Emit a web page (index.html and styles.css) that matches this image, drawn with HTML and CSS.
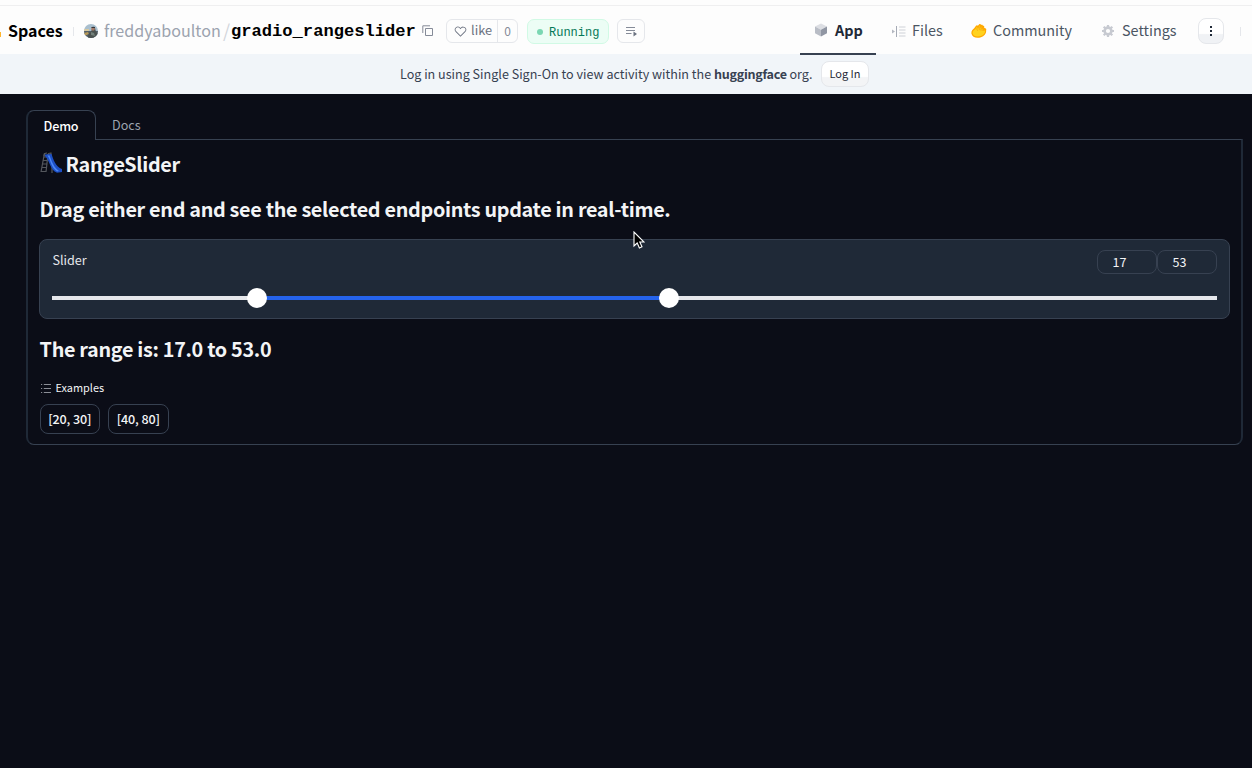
FILE: index.html
```html
<!DOCTYPE html>
<html lang="en">
<head>
<meta charset="utf-8">
<title>gradio_rangeslider</title>
<link rel="stylesheet" href="styles.css">
</head>
<body>
<header class="header">
  <div class="repo">
    <span class="logo-edge"></span>
    <span class="spaces">Spaces</span>
    <span class="divider"></span>
    <svg class="avatar" viewBox="0 0 14 14"><defs><clipPath id="round"><circle cx="7" cy="7" r="7"/></clipPath></defs><g clip-path="url(#round)"><path fill="#a9bfce" d="M0 0h14v14H0z"/><path fill="#d8c9a0" d="M0 5h5v2H0z"/><path fill="#55616a" d="M0 7h14v7H0z"/><path fill="#b99a58" d="M0 9l4-1 1 2-5 2z"/><path fill="#4b5250" d="M4 12l1-3 2-1 1-3 3-1 1 4 2 2v4H4z"/><circle cx="9" cy="5" r="1.800" fill="#a77b68"/><path fill="#343638" d="M7 4q1-2 4-1v1z"/><path fill="#73817b" d="M7 8l3 1 1 3-4-1z"/></g></svg>
    <span class="owner">freddyaboulton</span>
    <span class="slash">/</span>
    <span class="name">gradio_rangeslider</span>
    <svg class="copy" viewBox="0 0 12 12"><path d="M3.500 3.500h7v7h-7zM.8 8V.8H8" fill="none" stroke="#858b98"/></svg>
    <div class="like"><span class="like-main"><svg class="heart" viewBox="0 0 32 32"><path fill="#6b7280" d="M22.45 6a5.47 5.47 0 0 1 3.91 1.64 5.7 5.7 0 0 1 0 8L16 26.13 5.64 15.64a5.7 5.7 0 0 1 0-8 5.48 5.48 0 0 1 7.82 0l2.54 2.6 2.53-2.58A5.44 5.44 0 0 1 22.45 6m0-2a7.47 7.47 0 0 0-5.34 2.24L16 7.36l-1.11-1.12a7.49 7.49 0 0 0-10.68 0 7.72 7.72 0 0 0 0 10.82L16 29l11.79-11.94a7.72 7.72 0 0 0 0-10.82A7.49 7.49 0 0 0 22.45 4Z"/></svg><span class="lift">like</span></span><span class="like-count">0</span></div>
    <div class="running"><span class="dot"></span><span class="running-text">Running</span></div>
    <div class="logs"><svg viewBox="0 0 12 12"><path d="M0 1.500h9M0 4.500h9M0 7.500h5.500" stroke="#858b98" stroke-width="1.100"/><path d="M7.500 5.500v5l3.500-2.500z" fill="#6b7280"/></svg></div>
  </div>
  <nav class="nav">
    <a class="nav-item active"><svg class="cube" viewBox="0 0 12 14"><path fill="#dcdee3" d="M6 .5l6 3-6 3.300-6-3.300z"/><path fill="#b9bdc6" d="M0 3.500l6 3.300v6.700l-6-3.200z"/><path fill="#9096a3" d="M12 3.500l-6 3.300v6.700l6-3.200z"/></svg><span>App</span></a>
    <a class="nav-item files"><svg class="files-icon" viewBox="0 0 14 11"><path fill="#b4b8c1" d="M0 3.500l3 2-3 2z"/><path d="M4.500 0v11" stroke="#a5aab5"/><path d="M7 1h6.500M7 4h6.500M7 7h6.500M7 10h6.500" stroke="#ced1d7"/></svg><span class="lift">Files</span></a>
    <a class="nav-item community"><svg class="hand" viewBox="0 0 16 14"><path fill="#ffa800" d="M.4 9.500C.2 7 1.500 5.500 3.200 4.300L5 1.700c.6-.9 1.700-.6 1.900.1L8 .5c1-.9 2-.2 1.900.6 1-.9 2.200-.2 1.900.8 1.200-.3 1.900.8 1.300 1.800 2.300.8 2.500 1.500 2 2.300.6 2.900-1.600 6.200-5.100 7.200C5.500 14.500 1 13.300.4 9.500z"/><path fill="#ffd21e" d="M1.500 9c.2-2 1.200-2.900 2.800-3.700L6 2.400l.5 2.700L9 1.300l-.5 3.300L11 2.500l-.8 3.100 2.300-1-.7 2.200 2.400-.3c-.1 2.800-1.700 4.800-4.500 5.600-3.500 1-7.700.3-8.200-3.100z"/><path d="M5.500 4.500l1.200 2.300M7.900 2.800l.5 3.300M10.300 3.200l-.6 3.200M12.500 4.800l-1.700 2.100" stroke="#f59b0b" stroke-width=".7" fill="none"/></svg><span class="lift">Community</span></a>
    <a class="nav-item settings"><svg class="gear" viewBox="0 0 12 12"><circle cx="6" cy="6" r="3.400" fill="none" stroke="#c7cad1" stroke-width="2.600"/><path d="M6 0v2.300M6 9.700V12M0 6h2.300M9.700 6H12M1.700 1.700l1.600 1.600M8.700 8.700l1.600 1.600M1.700 10.300l1.600-1.600M8.700 3.300l1.600-1.600" stroke="#c7cad1" stroke-width="2.200"/></svg><span class="lift">Settings</span></a>
    <span class="more"><svg viewBox="0 0 4 10"><path fill="#1f2937" d="M1 0h2v2H1zM1 4h2v2H1zM1 8h2v2H1z"/></svg></span>
    <span class="divider end"></span>
  </nav>
</header>
<div class="banner"><span class="banner-text">Log in using Single Sign-On to view activity within the <b>huggingface</b> org.</span><span class="login">Log In</span></div>
<main class="app">
  <div class="tabs"><span class="tab selected">Demo</span><span class="tab docs">Docs</span></div>
  <section class="panel">
    <h2 class="title"><svg class="slide" viewBox="0 0 22 22"><g fill="none" stroke="#54575d" stroke-width="1.200"><path d="M4.500 1L1 20M8 2L6 20M3.500 5H8M3 8.500h4.500M2.500 12H7M2 15.500h4.500M1 19.500h5"/><path d="M4 4q0-3 3-3M8 3q0-2 3-2v6"/><path d="M12 14v7"/></g><path fill="#1d4fc4" d="M5 2.500L11.500 2c2 6 4 12.500 10.500 15v3l-5 .8C10 18 10 9 5 4z"/><path fill="#4b86f3" d="M7.500 3.500h2c2 5 4 12 9.500 15.500l-2 .5c-6-4-6-11-9.500-16z"/></svg><span>RangeSlider</span></h2>
    <h2 class="subtitle">Drag either end and see the selected endpoints update in real-time.</h2>
    <div class="slider-block">
      <div class="slider-head"><span class="slider-label">Slider</span><div class="numbers"><span class="number">17</span><span class="number">53</span></div></div>
      <div class="track"><div class="range"></div><span class="thumb low"></span><span class="thumb high"></span></div>
    </div>
    <h2 class="result">The range is: 17.0 to 53.0</h2>
    <div class="examples-label"><svg viewBox="0 0 10 9"><path d="M0 .5h1.200M0 4.500h1.200M0 8.500h1.200M2.800 .5H10M2.800 4.500H10M2.800 8.500H10" stroke="#8b8e96"/></svg><span class="lift">Examples</span></div>
    <div class="examples"><span class="example">[20, 30]</span><span class="example">[40, 80]</span></div>
  </section>
</main>
<svg class="cursor" viewBox="0 0 12 19"><path d="M1 1v14l3.200-3 2.200 5 2.600-1.200L6.800 11H11z" fill="#000" stroke="#fff" stroke-width="1.100"/></svg>
</body>
</html>
```
FILE: styles.css
```css
* { box-sizing: border-box; }
body { margin: 0; height: 768px; overflow: hidden; background: #0b0d17; font-family: "Noto Sans CJK SC", "Noto Sans", sans-serif; display: flex; flex-direction: column; }
svg { display: block; flex: none; }
span { white-space: nowrap; }
.lift { padding-bottom: 2px; }
.header { height: 54px; flex: none; padding-top: 7px; display: flex; justify-content: space-between; background: linear-gradient(#fdfdfd 0 5px, #efeff0 5px 6px, #fdfdfd 6px); }
.repo { display: flex; align-items: center; height: 48px; }
.logo-edge { width: 1px; height: 5px; margin-top: 7px; background: #ffb52b; }
.spaces { width: 65px; padding: 0 0 2px 7px; font-size: 16px; font-weight: 700; color: #000; }
.divider { width: 1px; height: 9px; margin-left: 7px; background: #e5e7eb; }
.avatar { width: 14px; height: 14px; margin-left: 10px; }
.owner { width: 117px; margin-left: 6px; padding-bottom: 2px; font-size: 16.100px; color: #9ca3af; }
.slash { width: 6px; margin-left: 2px; padding-bottom: 2px; font-size: 18px; line-height: 24px; color: #d1d5db; }
.name { width: 184px; margin-left: 2px; padding-top: 2px; font: 700 17.120px/24px "Liberation Mono", monospace; color: #000; }
.copy { width: 12px; height: 12px; margin-left: 7px; }
.like { display: flex; width: 72px; height: 24px; margin-left: 12px; border: 1px solid #e5e7eb; border-radius: 6px; color: #6b7280; font-size: 12.800px; line-height: 22px; }
.like-main { display: flex; align-items: center; gap: 4px; width: 51px; padding-left: 7px; border-right: 1px solid #e5e7eb; }
.like-main .lift { line-height: 20px; }
.heart { width: 13px; height: 13px; }
.like-count { flex: 1; text-align: center; font-size: 12px; line-height: 21px; color: #858b98; }
.running { display: flex; align-items: center; width: 82px; height: 25px; margin: 1px 0 0 9px; padding-left: 9px; border: 1px solid #d1fae5; border-radius: 7px; background: #ecfdf5; color: #047857; font: 12px/20px "Liberation Mono", monospace; }
.running-text { padding-top: 2px; }
.dot { width: 6px; height: 6px; margin-right: 6px; border-radius: 50%; background: #7ad7b2; }
.logs { width: 28px; height: 24px; margin-left: 8px; padding: 6px 0 0 8px; border: 1px solid #e5e7eb; border-radius: 6px; }
.logs svg { width: 12px; height: 12px; }
.nav { display: flex; width: 452px; height: 48px; align-items: center; color: #4b5563; font-size: 14.400px; line-height: 20px; }
.nav-item { display: flex; align-items: center; height: 48px; }
.active { position: relative; z-index: 1; width: 76px; padding-left: 15px; border-bottom: 2px solid #374151; color: #1f2937; font-weight: 700; }
.cube { width: 12px; height: 14px; margin-right: 8px; }
.files { width: 80px; padding-left: 16px; }
.files-icon { width: 14px; height: 11px; margin-right: 6px; }
.community { width: 130px; padding-left: 15px; }
.hand { width: 16px; height: 14px; margin-right: 6px; }
.settings { width: 112px; padding-left: 16px; }
.gear { width: 12px; height: 12px; margin-right: 8px; }
.more { display: flex; align-items: center; justify-content: center; width: 26px; height: 26px; border: 1px solid #e5e7eb; border-radius: 8px; background: linear-gradient(#fff 60%, #f0f2f5 65%); }
.more svg { width: 4px; height: 10px; }
.end { margin-left: 16px; }
.banner { height: 40px; flex: none; display: flex; padding: 7px 0 0 400px; background: #f1f5f9; color: #374151; font-size: 12.570px; line-height: 26px; }
.banner b { letter-spacing: -.28px; }
.banner-text { width: 413px; }
.login { width: 48px; height: 26px; margin-left: 8px; border: 1px solid #e5e7eb; border-radius: 8px; background: linear-gradient(#fff 60%, #f3f4f6 65%); color: #1f2937; text-align: center; font-size: 11px; line-height: 23px; }
.app { padding: 16px 9px 0 26px; color: #f3f4f6; }
.tabs { display: flex; height: 29px; font-size: 12.600px; line-height: 28px; }
.tab { display: block; }
.selected { position: relative; width: 70px; height: 30px; padding-left: 15.500px; border: 1px solid #374151; border-width: 1px 1px 0 2px; border-left-color: #1f2937; border-radius: 8px 8px 0 0; background: #0b0d17; font-weight: 500; letter-spacing: -.15px; line-height: 29px; color: #fff; }
.docs { padding: 1px 0 0 16px; color: #9ca3af; }
.panel { height: 306px; padding: 0 11px; border: 1px solid #374151; border-width: 1px 2px 1px 2px; border-left-color: #1f2937; border-right-color: #1f2937; border-radius: 0 0 8px 8px; }
h2 { margin: 0; padding-left: .6px; font-size: 19.800px; line-height: 30px; font-weight: 700; letter-spacing: -.31px; white-space: nowrap; color: #f3f4f6; }
.title { display: flex; padding-top: 9px; height: 39px; gap: 4px; }
.slide { width: 22px; height: 22px; margin-top: 3px; }
.subtitle { margin-top: 15px; line-height: 29px; padding-bottom: 1px; }
.slider-block { height: 80px; margin-top: 15px; padding: 10px 12px 0; border: 1px solid #374151; border-radius: 8px; background: #1f2937; }
.slider-head { display: flex; justify-content: space-between; }
.slider-label { padding-left: .5px; font-size: 12.600px; line-height: 19px; color: #e5e7eb; }
.numbers { display: flex; }
.number { width: 60px; height: 24px; padding-left: 14.500px; border: 1px solid #374151; border-radius: 8px; font-size: 12.600px; line-height: 22px; }
.track { position: relative; height: 4px; margin-top: 22px; background: #e5e7eb; }
.range { width: 412px; height: 4px; margin-left: 205px; background: #2563eb; }
.thumb { position: absolute; top: -8px; width: 20px; height: 20px; border-radius: 50%; background: #fff; }
.low { left: 195px; }
.high { left: 607px; }
.result { margin-top: 15px; }
.examples-label { display: flex; align-items: center; height: 18px; margin-top: 15px; gap: 5px; padding-left: 1.500px; font-size: 10.900px; line-height: 18px; }
.examples-label svg { width: 10px; height: 9px; }
.examples { display: flex; gap: 8px; margin-top: 7px; padding-left: .5px; }
.example { width: 60.500px; height: 30px; border: 1px solid #374151; border-radius: 8px; text-align: center; font-size: 12.600px; line-height: 28px; font-weight: 500; letter-spacing: -.15px; }
.cursor { position: absolute; left: 632.500px; top: 231px; width: 12px; height: 19px; }
```
